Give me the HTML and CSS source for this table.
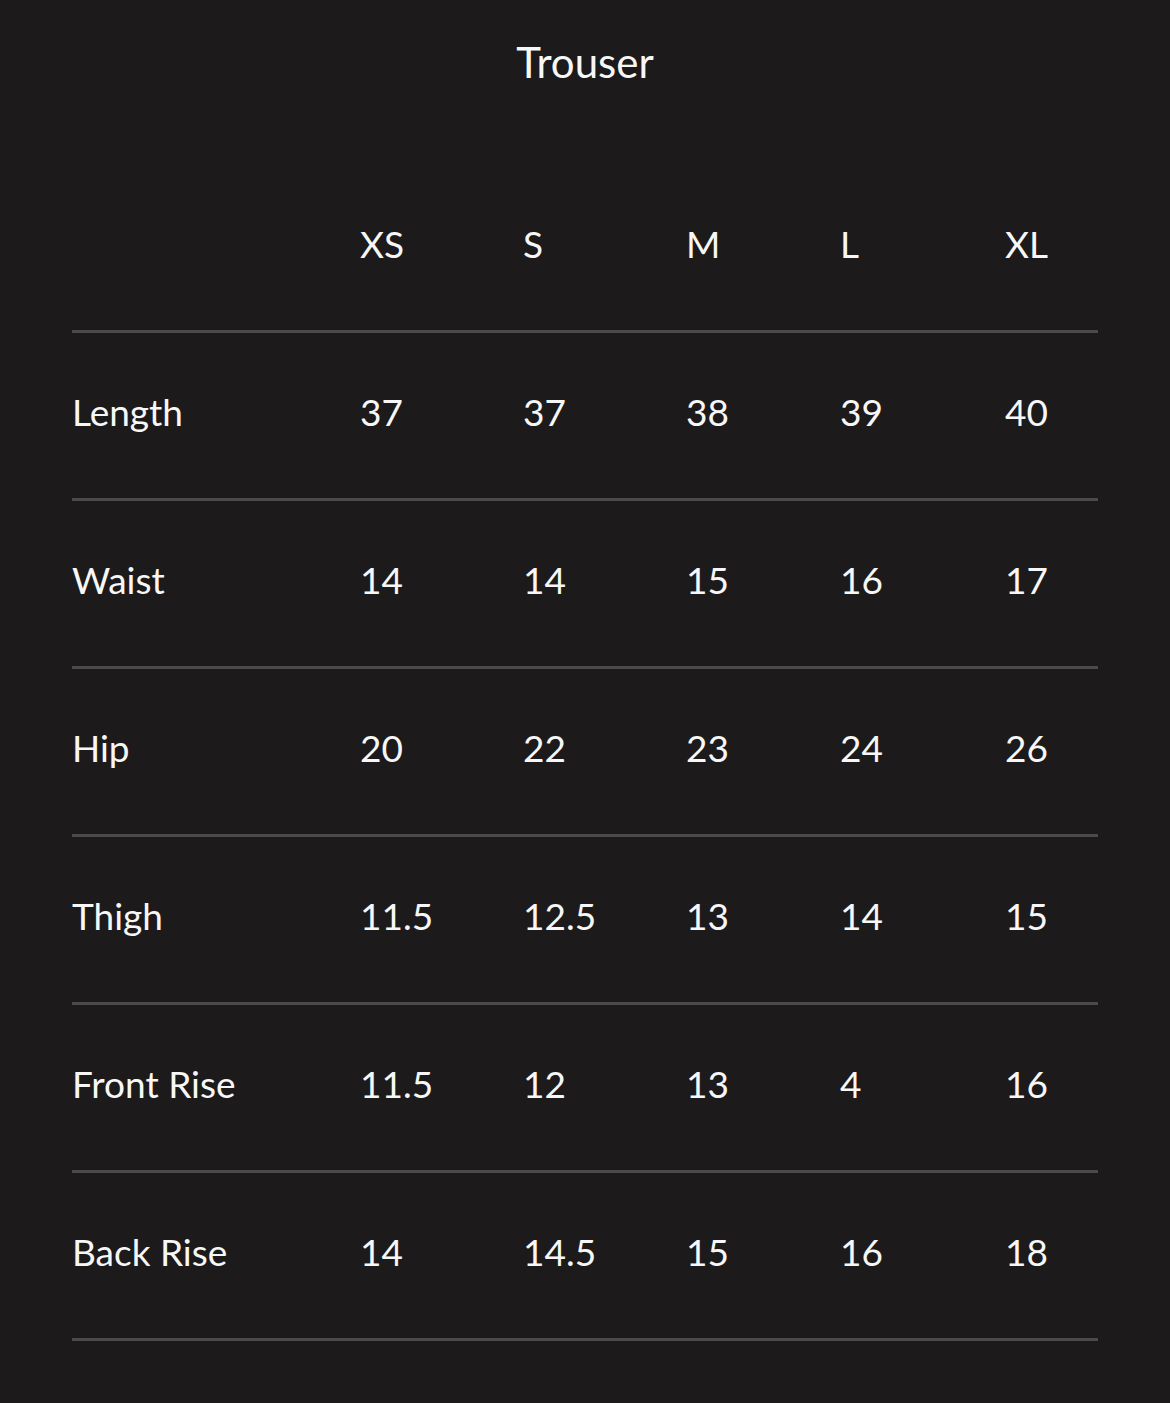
FILE: index.html
```html
<!DOCTYPE html>
<html>
<head>
<meta charset="utf-8">
<link rel="stylesheet" href="styles.css">
</head>
<body>
<div class="page">
  <h1 class="title">Trouser</h1>
  <div class="table">
    <div class="row head"><span></span><span>XS</span><span>S</span><span>M</span><span>L</span><span>XL</span><span></span></div>
    <div class="row"><span>Length</span><span>37</span><span>37</span><span>38</span><span>39</span><span>40</span><span></span></div>
    <div class="row"><span>Waist</span><span>14</span><span>14</span><span>15</span><span>16</span><span>17</span><span></span></div>
    <div class="row"><span>Hip</span><span>20</span><span>22</span><span>23</span><span>24</span><span>26</span><span></span></div>
    <div class="row"><span>Thigh</span><span>11.5</span><span>12.5</span><span>13</span><span>14</span><span>15</span><span></span></div>
    <div class="row"><span>Front Rise</span><span>11.5</span><span>12</span><span>13</span><span>4</span><span>16</span><span></span></div>
    <div class="row"><span>Back Rise</span><span>14</span><span>14.5</span><span>15</span><span>16</span><span>18</span><span></span></div>
  </div>
</div>
</body>
</html>
```

FILE: styles.css
```css
html, body {
  margin: 0;
  padding: 0;
  background: #1c1a1b;
}
.page {
  width: 1170px;
  height: 1403px;
  font-family: "Lato", "Noto Sans", sans-serif;
  color: #f7f7f7;
}
.title {
  margin: 0;
  height: 124px;
  line-height: 124px;
  text-align: center;
  font-size: 42px;
  font-weight: 400;
}
.table {
  margin: 41px 72px 0 72px;
}
.row {
  display: grid;
  grid-template-columns: 288px 163px 163px 154px 165px 93px;
  align-content: center;
  align-items: center;
  height: 157px;
  padding-bottom: 8px;
  line-height: 44px;
  border-bottom: 3px solid #4a4a4a;
  font-size: 37px;
}
.row span {
  white-space: nowrap;
}
```
